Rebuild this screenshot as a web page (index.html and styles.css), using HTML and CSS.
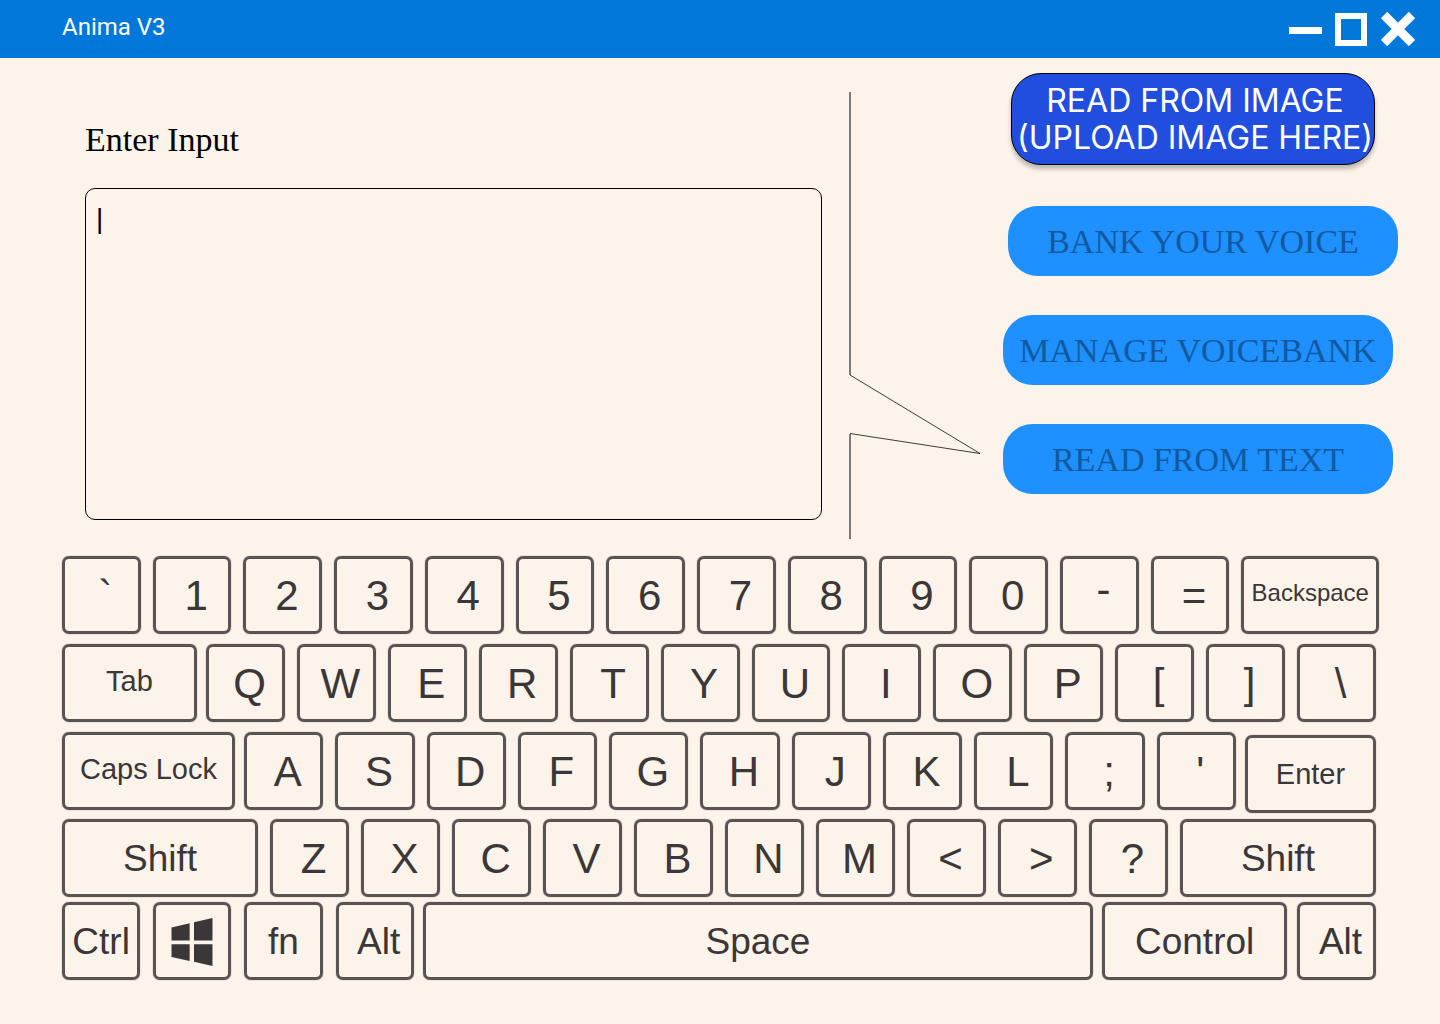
FILE: index.html
```html
<!DOCTYPE html>
<html lang="en">
<head>
<meta charset="utf-8">
<title>Anima V3</title>
<meta name="viewport" content="width=device-width, initial-scale=1">
<link rel="stylesheet" href="styles.css">
</head>
<body>
<header class="titlebar">
  <h1 class="titlebar-name">Anima V3</h1>
  <div class="window-controls">
    <button type="button" aria-label="Minimize"><svg width="33" height="34" viewBox="0 0 33 34"><path d="M0 15h33v7H0z" fill="#fff"/></svg></button>
    <button type="button" aria-label="Maximize"><svg width="33" height="34" viewBox="0 0 33 34"><path d="M3 4h26v27H3z" fill="none" stroke="#fff" stroke-width="6"/></svg></button>
    <button type="button" aria-label="Close"><svg width="34" height="34" viewBox="0 0 34 34"><path d="M3 3l28 28M31 3L3 31" fill="none" stroke="#fff" stroke-width="9"/></svg></button>
  </div>
</header>
<main>
  <section class="workspace">
    <div class="editor">
      <label class="editor-label" for="speech">Enter Input</label>
      <textarea class="editor-input" id="speech" spellcheck="false">|</textarea>
    </div>
    <svg class="pointer" width="132" height="447" viewBox="0 0 132 447" fill="none" stroke="#000" aria-hidden="true"><path d="M1 0V283M1 342V447"/><path d="M1 283L131 361.500 1 341.500" stroke-opacity="0.75"/></svg>
    <nav class="actions" aria-label="Actions">
      <button type="button" class="action-upload">READ FROM IMAGE<br>(UPLOAD IMAGE HERE)</button>
      <button type="button" class="action action-end">BANK YOUR VOICE</button>
      <button type="button" class="action">MANAGE VOICEBANK</button>
      <button type="button" class="action">READ FROM TEXT</button>
    </nav>
  </section>
  <section class="keyboard" aria-label="On-screen keyboard">
    <div class="row row-digits">
      <button type="button" class="key">`</button><button type="button" class="key">1</button><button type="button" class="key">2</button><button type="button" class="key">3</button><button type="button" class="key">4</button><button type="button" class="key">5</button><button type="button" class="key">6</button><button type="button" class="key">7</button><button type="button" class="key">8</button><button type="button" class="key">9</button><button type="button" class="key">0</button><button type="button" class="key key-dash">-</button><button type="button" class="key">=</button>
      <button type="button" class="key key-small key-backspace">Backspace</button>
    </div>
    <div class="row row-top">
      <button type="button" class="key key-small">Tab</button>
      <div class="letters">
        <button type="button" class="key">Q</button><button type="button" class="key">W</button><button type="button" class="key">E</button><button type="button" class="key">R</button><button type="button" class="key">T</button><button type="button" class="key">Y</button><button type="button" class="key">U</button><button type="button" class="key">I</button><button type="button" class="key">O</button><button type="button" class="key">P</button><button type="button" class="key">[</button><button type="button" class="key">]</button><button type="button" class="key">\</button>
      </div>
    </div>
    <div class="row row-home">
      <button type="button" class="key key-small">Caps Lock</button>
      <div class="letters">
        <button type="button" class="key">A</button><button type="button" class="key">S</button><button type="button" class="key">D</button><button type="button" class="key">F</button><button type="button" class="key">G</button><button type="button" class="key">H</button><button type="button" class="key">J</button><button type="button" class="key">K</button><button type="button" class="key">L</button><button type="button" class="key">;</button><button type="button" class="key">'</button>
      </div>
      <button type="button" class="key key-small key-enter">Enter</button>
    </div>
    <div class="row row-bottom">
      <button type="button" class="key key-word">Shift</button>
      <div class="letters">
        <button type="button" class="key">Z</button><button type="button" class="key">X</button><button type="button" class="key">C</button><button type="button" class="key">V</button><button type="button" class="key">B</button><button type="button" class="key">N</button><button type="button" class="key">M</button><button type="button" class="key">&lt;</button><button type="button" class="key">&gt;</button><button type="button" class="key">?</button>
      </div>
      <button type="button" class="key key-word">Shift</button>
    </div>
    <div class="row row-space">
      <div class="letters">
        <button type="button" class="key key-word">Ctrl</button>
        <button type="button" class="key key-word" aria-label="Windows"><svg width="42" height="48" viewBox="395 575 122 143" fill="#3b3637"><path d="M395 603l54-12v51h-54zM462 588l55-13v67h-55zM395 653h54v50l-54-12zM462 653h55v65l-55-13z"/></svg></button>
        <button type="button" class="key key-word">fn</button>
        <button type="button" class="key key-word key-alt">Alt</button>
      </div>
      <button type="button" class="key key-word">Space</button>
      <div class="modifiers">
        <button type="button" class="key key-word">Control</button>
        <button type="button" class="key key-word key-alt">Alt</button>
      </div>
    </div>
  </section>
</main>
</body>
</html>
```
FILE: styles.css
```css
* { box-sizing: border-box; }

body {
  margin: 0;
  background: #fcf3ea;
  color: #000;
  font-family: "Liberation Serif", serif;
}

button {
  margin: 0;
  padding: 0;
  border: 0;
  background: none;
  color: inherit;
  font: inherit;
  cursor: pointer;
}

svg { display: block; }

/* Title bar */
.titlebar {
  display: flex;
  justify-content: space-between;
  align-items: flex-start;
  height: 58px;
  padding: 12px 25px 0 62px;
  background: #0078d9;
  color: #fff;
}

.titlebar-name {
  margin: 0;
  font: 400 24px/30px Roboto, sans-serif;
}

.window-controls { display: flex; gap: 13px; }

/* Workspace */
.workspace {
  display: flex;
  align-items: flex-start;
  padding: 0 42px 0 85px;
}

.editor {
  display: flex;
  flex: 1;
  flex-direction: column;
  gap: 28px;
  min-width: 0;
  padding-top: 62px;
}

.editor-label { font-size: 34px; line-height: 40px; }

.editor-input {
  width: 100%;
  height: 332px;
  padding: 14px 10px;
  border: 1px solid #000;
  border-radius: 10px;
  outline: 0;
  background: transparent;
  color: #000;
  font: 28px/32px "Liberation Sans", sans-serif;
  resize: none;
}

.pointer { flex: none; margin: 34px 22px 0 27px; }

.actions {
  display: flex;
  flex: none;
  flex-direction: column;
  gap: 39px;
  width: 395px;
  padding-top: 15px;
}

.action {
  width: 390px;
  height: 70px;
  padding-top: 2px;
  border-radius: 30px;
  background: #1e90ff;
  color: #115a9f;
  font-size: 34px;
  line-height: 40px;
  white-space: nowrap;
}

.action-end { align-self: flex-end; }

.action-upload {
  width: 364px;
  height: 92px;
  margin: 0 0 2px 8px;
  padding-left: 4px;
  border: 1px solid #000;
  border-radius: 30px;
  background: #224ee0;
  box-shadow: 0 4px 4px rgba(0, 0, 0, 0.25);
  color: #fff;
  font: 32px/37px Inter, sans-serif;
  white-space: nowrap;
}

/* Keyboard */
.keyboard {
  padding: 17px 64px 43px 62px;
  color: #3b3637;
  font-family: "Liberation Sans", sans-serif;
}

.row { display: grid; }

.row-digits {
  grid-template-columns: repeat(13, 79fr) 138fr;
  gap: 12px;
  margin: 0 -3px 10px 0;
}

.row-top {
  grid-template-columns: 135fr 1170fr;
  gap: 9px;
  margin-bottom: 10px;
}

.row-home {
  grid-template-columns: 173fr 992fr 131fr;
  gap: 9px;
  margin-bottom: 9px;
}

.row-bottom {
  grid-template-columns: 196fr 897fr 196fr;
  gap: 12px;
  margin-bottom: 5px;
}

.row-space {
  grid-template-columns: 352fr 671fr 274fr;
  gap: 9px;
}

.letters {
  display: grid;
  grid-auto-flow: column;
  grid-auto-columns: 1fr;
  gap: 12px;
  min-width: 0;
}

.row-space .letters { gap: 13px; }

.modifiers {
  display: grid;
  grid-template-columns: 185fr 79fr;
  gap: 10px;
  min-width: 0;
}

.key {
  display: flex;
  align-items: center;
  justify-content: center;
  min-width: 0;
  height: 78px;
  padding: 2px 0 0 8px;
  border: 3px solid #595354;
  border-radius: 7px;
  box-shadow: 0 0 1px #595354;
  font-size: 42px;
  line-height: 48px;
  white-space: nowrap;
}

.key-small { padding: 0 0 4px; font-size: 29px; }
.key-word { padding-left: 0; font-size: 37px; }
.key-alt { padding-left: 8px; }
.key-dash { padding-bottom: 12px; }
.key-backspace { font-size: 24px; }

.key-enter {
  align-self: flex-end;
  margin-bottom: -3px;
  padding-bottom: 0;
}
```
